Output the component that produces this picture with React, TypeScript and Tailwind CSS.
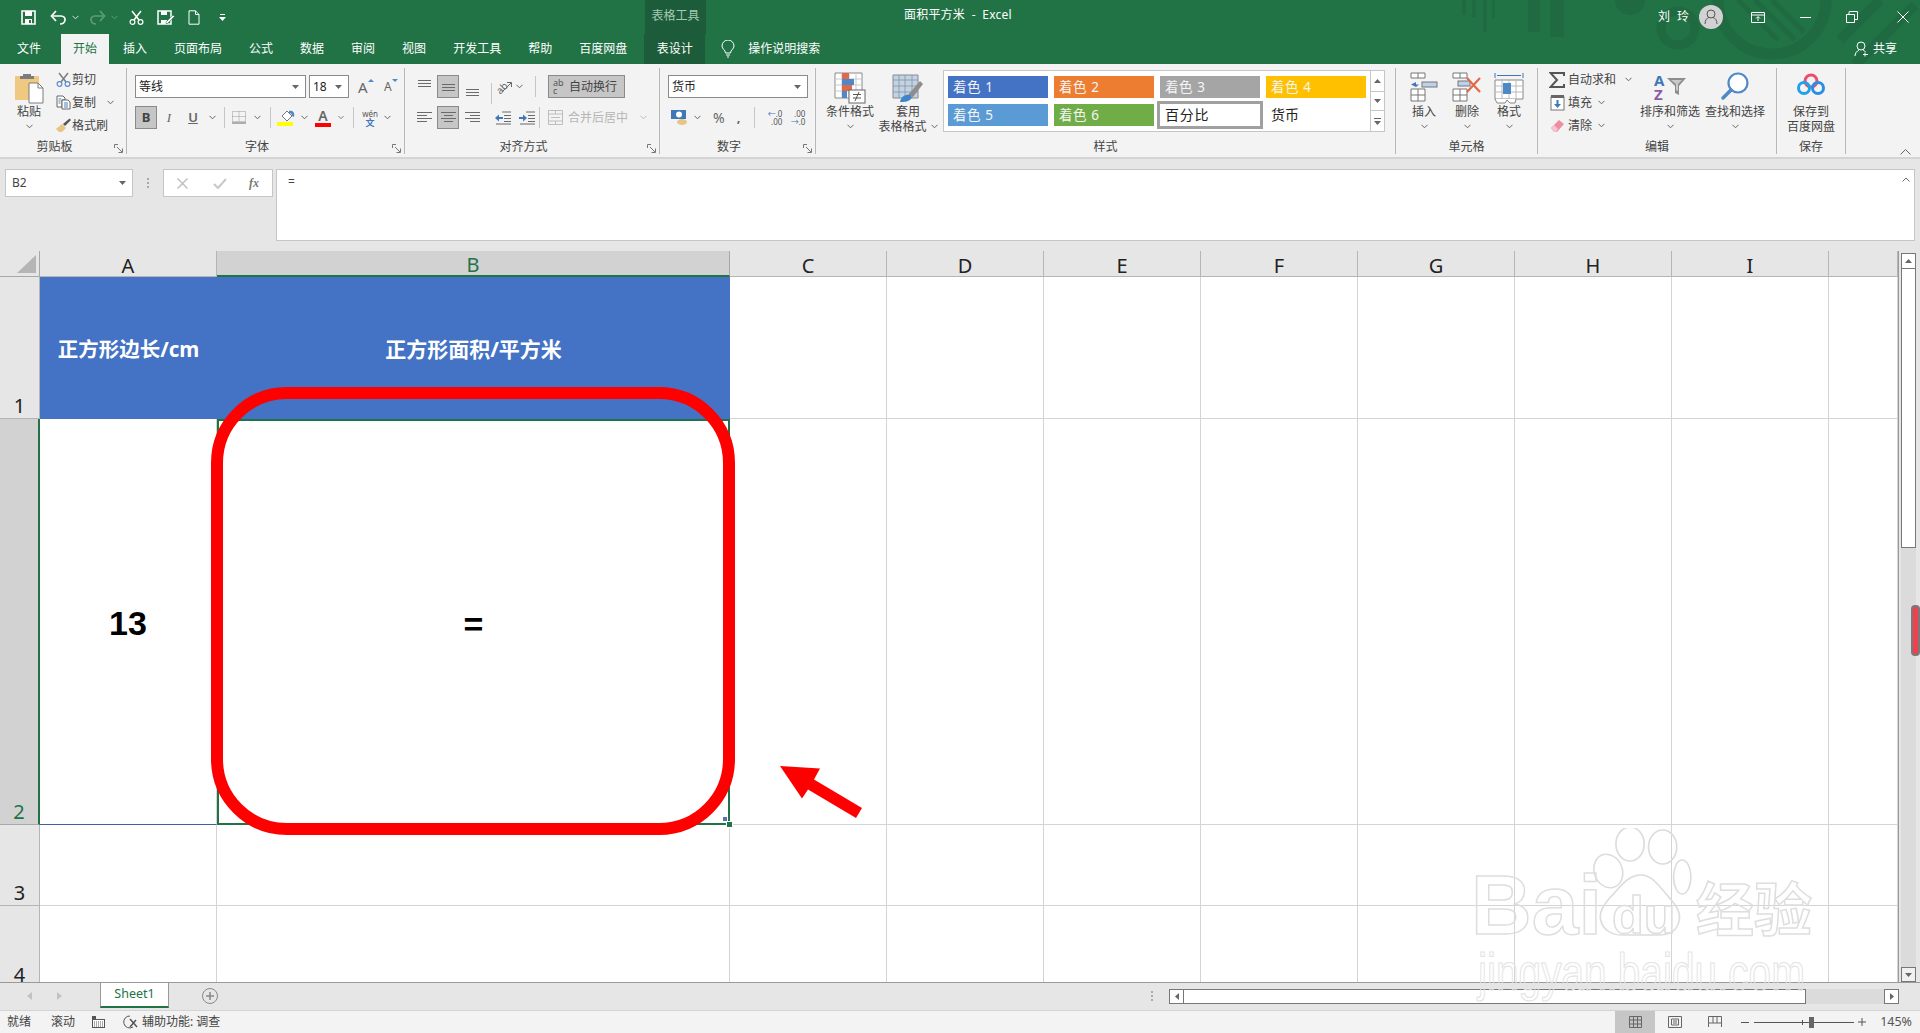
import React from "react";

const Chev = ({ cls = "text-[#666]" }: { cls?: string }) => (
  <svg width="7" height="5" viewBox="0 0 7 5" className={cls}>
    <path d="M.5 .8l3 3 3-3" stroke="currentColor" fill="none" />
  </svg>
);
const Caret = () => (
  <svg width="7" height="4" viewBox="0 0 7 4" className="text-[#666]">
    <path d="M0 0h7L3.5 4z" fill="currentColor" />
  </svg>
);
const Launcher = () => (
  <svg width="9" height="9" viewBox="0 0 9 9" className="absolute right-[3px] bottom-[1px] text-[#777]">
    <path d="M.5 4V.5H4M3 3l5 5M8.5 4.5v4h-4" stroke="currentColor" fill="none" />
  </svg>
);
const Sep = ({ cls }: { cls: string }) => (
  <span className={`flex justify-center ${cls}`}>
    <span className="w-px h-[21px] bg-[#c6c6c6]" />
  </span>
);

const Group = ({ w, label, launcher, children }: { w: string; label: string; launcher?: boolean; children: React.ReactNode }) => (
  <div className={`flex flex-col h-[86px] border-r border-[#b8b8b8] ${w}`}>
    <div className="flex h-[72px]">{children}</div>
    <div className={`relative flex-1 flex items-center justify-center pt-[3px] text-[12px] leading-[14px] text-[#444] ${launcher ? "pr-[17px]" : ""}`}>
      {label}
      {launcher && <Launcher />}
    </div>
  </div>
);

const Big = ({ w, icon, l1, l2, chevInline }: { w: string; icon: React.ReactNode; l1: string; l2?: string; chevInline?: boolean }) => (
  <div className={`flex flex-col items-center text-[12px] leading-[15px] text-[#444] ${w}`}>
    <div className="h-[36px] pt-[4px] flex justify-center">{icon}</div>
    <div className="whitespace-nowrap">{l1}</div>
    {l2 ? (
      <div className="flex items-center gap-[4px] whitespace-nowrap">
        {l2}
        {chevInline && <Chev />}
      </div>
    ) : (
      <div className="h-[15px] flex items-center justify-center">
        <Chev />
      </div>
    )}
  </div>
);

const SaveIcon = () => (
  <svg width="15" height="15" viewBox="0 0 15 15">
    <path d="M1 1h13v13H1z" fill="none" stroke="#fff" strokeWidth="1.6" />
    <path d="M4 1h7v5H4zM4 9h7v5H4z" fill="#fff" />
    <path d="M8 10h2v3H8z" fill="#217346" />
  </svg>
);

const PasteIcon = () => (
  <svg width="30" height="32" viewBox="0 0 30 32">
    <rect x="1" y="4" width="24" height="24" rx="1" fill="#efc881" />
    <path d="M9 4V2h8v2h3v3H6V4z" fill="#7d7d7d" />
    <path d="M15 11h9l5 5v15H15z" fill="#fff" stroke="#7d7d7d" />
    <path d="M24 11v5h5" fill="none" stroke="#7d7d7d" />
  </svg>
);
const ScissorIcon = ({ c = "#7d7d7d", c2 = "#5b8dc7", s = 15 }: { c?: string; c2?: string; s?: number }) => (
  <svg width={s} height={s} viewBox="0 0 15 15">
    <path d="M3 1l7 9M12 1L5 10" stroke={c} strokeWidth="1.5" fill="none" />
    <circle cx="3.5" cy="12" r="2.4" fill="none" stroke={c2} strokeWidth="1.2" />
    <circle cx="11.5" cy="12" r="2.4" fill="none" stroke={c2} strokeWidth="1.2" />
  </svg>
);
const CopyIcon = () => (
  <svg width="15" height="15" viewBox="0 0 15 15">
    <path d="M1 1h6l2 2v2H6v7H1z" fill="#fff" stroke="#666" />
    <path d="M6 5h6l2 2v7H6z" fill="#fff" stroke="#666" />
    <path d="M8 8h4M8 10h4M8 12h4M2.5 4h3M2.5 6h2M2.5 8h2" stroke="#4a7ebb" />
  </svg>
);
const BrushIcon = () => (
  <svg width="17" height="15" viewBox="0 0 17 15">
    <path d="M1 11l6-5 4 4-4 4H4z" fill="#e9c583" />
    <path d="M8 6l2 2 6-6-1.500-1.500z" fill="#555" />
  </svg>
);
const AlignLines = ({ pad, kind }: { pad: number; kind: "l" | "c" | "r" }) => {
  const ws = [15, kind === "c" ? 9 : 10, 15, kind === "c" ? 9 : 10];
  return (
    <svg width="15" height="13" viewBox="0 0 15 13">
      {ws.map((w, i) => {
        const x = kind === "l" ? 0 : kind === "r" ? 15 - w : (15 - w) / 2;
        return <rect key={i} x={x} y={pad + i * 3} width={w} height="1" fill="#6a6a6a" />;
      })}
    </svg>
  );
};
const VLines = ({ y }: { y: number }) => (
  <svg width="15" height="20" viewBox="0 0 15 20">
    {[0, 3, 6].map((d) => (
      <rect key={d} x="1" y={y + d} width="13" height="1" fill="#6a6a6a" />
    ))}
  </svg>
);
const Indent = ({ right }: { right?: boolean }) => (
  <svg width="17" height="14" viewBox="0 0 17 14">
    <path d="M7 1h9M9 4.500h7M9 7.500h7M9 10.500h7M1 13h15" stroke="#6a6a6a" fill="none" />
    {right ? (
      <path d="M0 6h4V3.500L8 7l-4 3.500V8H0z" fill="#3f77b8" />
    ) : (
      <path d="M8 6H4V3.500L0 7l4 3.500V8h4z" fill="#3f77b8" />
    )}
  </svg>
);
const CondIcon = () => (
  <svg width="32" height="32" viewBox="0 0 32 32">
    <path d="M1 1h27v25H1z" fill="#fff" stroke="#8a8a8a" />
    <path d="M1 7h27M1 13h27M1 19h27M8 1v25M15 1v25M22 1v25" stroke="#c9c9c9" />
    <rect x="8" y="1" width="7" height="6" fill="#e0694a" />
    <rect x="8" y="7" width="12" height="6" fill="#4f88c6" />
    <rect x="8" y="13" width="10" height="6" fill="#e0694a" />
    <rect x="8" y="19" width="5" height="7" fill="#4f88c6" />
    <rect x="15" y="18" width="16" height="13" fill="#fff" stroke="#666" />
    <path d="M19 22.500h8M19 26h8M25 20l-4 9" stroke="#555" fill="none" />
  </svg>
);
const TableFmtIcon = () => (
  <svg width="32" height="32" viewBox="0 0 32 32">
    <path d="M1 3h25v23H1z" fill="#c0d4e9" stroke="#8a8a8a" />
    <path d="M1 8h25M1 14h25M1 20h25M7 3v23M13 3v23M20 3v23" stroke="#8f8f8f" strokeWidth=".8" />
    <path d="M16 23L28 9l3 3-10 13z" fill="#8d8d8d" />
    <path d="M8 30c1-6 6-8 10-7 2 1 2 3 1 4-3 3-7 3-11 3z" fill="#3f86c9" />
  </svg>
);
const InsertIcon = () => (
  <svg width="28" height="30" viewBox="0 0 28 30">
    <path d="M1 1h14v5H1zM8 1v5M1 17h14v12H1zM1 23h14M8 17v12" fill="#fff" stroke="#777" />
    <rect x="12" y="10" width="15" height="5" fill="#bcd2ea" stroke="#777" />
    <path d="M1 12.500h3V10l5 2.500L4 15" fill="#3f77b8" transform="matrix(-1 0 0 1 10 0)" />
  </svg>
);
const DeleteIcon = () => (
  <svg width="30" height="30" viewBox="0 0 30 30">
    <path d="M1 1h14v5H1zM8 1v5M1 17h14v12H1zM1 23h14M8 17v12" fill="#fff" stroke="#777" />
    <rect x="6" y="9" width="12" height="5" fill="#bcd2ea" stroke="#777" />
    <path d="M15 6l13 14M28 6L15 20" stroke="#e0694a" strokeWidth="2.200" />
  </svg>
);
const FmtIcon = () => (
  <svg width="30" height="32" viewBox="0 0 30 32">
    <path d="M1 1v5M29 1v5M3 3.500h24" stroke="#3f77b8" fill="none" />
    <path d="M1 8h28v19H1z" fill="#fff" stroke="#888" />
    <path d="M1 14h28M1 20h28M8 8v19M15 8v19M22 8v19" stroke="#bbb" />
    <rect x="9" y="11" width="8" height="11" fill="#4f88c6" />
    <path d="M1 27l2 4h8l2-3 3 3h5l1-4" fill="#fff" stroke="#888" />
  </svg>
);
const SumIcon = () => (
  <svg width="16" height="16" viewBox="0 0 16 16">
    <path d="M15 4V1H1.500L8 8l-6.500 7H15v-3" fill="none" stroke="#555" strokeWidth="2" />
  </svg>
);
const FillIcon = () => (
  <svg width="15" height="16" viewBox="0 0 15 16">
    <rect x="1" y="2" width="13" height="13" fill="#fff" stroke="#777" />
    <rect x="1" y="0" width="13" height="3" fill="#666" />
    <path d="M6.500 5h2v4H11l-3.500 4L4 9h2.500z" fill="#3f77b8" />
  </svg>
);
const EraserIcon = () => (
  <svg width="15" height="14" viewBox="0 0 15 14">
    <path d="M1 9l8-8 5 4-7 8H4z" fill="#ec8fa3" />
    <path d="M1 9l3-3 4 4-2 3H4z" fill="#f5c4cf" />
  </svg>
);
const SortIcon = () => (
  <div className="flex items-center h-[30px] w-[32px]">
    <span className="flex flex-col font-bold text-[15px] leading-[14px] w-[13px]">
      <span className="text-[#3f77b8]">A</span>
      <span className="text-[#8c5aa8]">Z</span>
    </span>
    <svg width="19" height="20" viewBox="0 0 19 20">
      <path d="M0 1h19l-7 8v9l-4-2V9z" fill="#8d8d8d" />
      <path d="M4 3h11l-4 4v7l-2-1V7z" fill="#c9c9c9" />
    </svg>
  </div>
);
const SearchIcon = () => (
  <svg width="30" height="30" viewBox="0 0 30 30">
    <circle cx="18" cy="11" r="9.500" fill="#fff" stroke="#4f88c6" strokeWidth="2.200" />
    <path d="M11 18L3 26" stroke="#4f88c6" strokeWidth="3.500" strokeLinecap="round" />
  </svg>
);
const BaiduIcon = () => (
  <svg width="28" height="26" viewBox="0 0 28 26">
    <circle cx="14" cy="9" r="6" fill="none" stroke="#ef4b6c" strokeWidth="3" />
    <circle cx="7" cy="16" r="5.500" fill="none" stroke="#1ea3e8" strokeWidth="3" />
    <circle cx="21" cy="16" r="5.500" fill="none" stroke="#2a8fe0" strokeWidth="3" />
  </svg>
);

const SmallRow = ({ icon, text, gap, chev }: { icon: React.ReactNode; text: string; gap: string; chev?: string }) => (
  <div className="h-[23px] flex items-center text-[12px] text-[#444]">
    <span className="w-[18px] flex justify-center">{icon}</span>
    <span className={`whitespace-nowrap ${gap}`}>{text}</span>
    {chev && (
      <span className={chev}>
        <Chev />
      </span>
    )}
  </div>
);

const TitleBar = () => (
  <div className="relative h-[34px] flex items-center text-white text-[12px] leading-[16px]">
    <svg className="absolute left-[1450px] top-0 text-[#1f6a41]" width="470" height="64" viewBox="0 0 470 64" fill="currentColor">
      <path d="M12 0h4v15h-4zM22 0h4v17h-4zM33 0h4v32h-4zM42 0h3v18h-3zM78 0h12v32H78zM100 0h14v37h-14z" />
      <circle cx="180" cy="0" r="15" />
      <circle cx="228" cy="28" r="17" fill="none" stroke="currentColor" strokeWidth="9" />
      <circle cx="322" cy="0" r="54" fill="none" stroke="currentColor" strokeWidth="11" />
      <path d="M288 0l40 40M305 0l40 40M322 0l32 32" stroke="currentColor" strokeWidth="5" fill="none" />
      <path d="M465 5l-60 60M430 0l-40 40" stroke="currentColor" strokeWidth="10" fill="none" />
    </svg>
    <div className="relative flex items-center h-full w-[645px]">
      <span className="w-[21px]" />
      <SaveIcon />
      <span className="ml-[14px] flex items-center gap-[5px]">
        <svg width="17" height="15" viewBox="0 0 17 15">
          <path d="M3 6h8c6 0 5 8-1 8" fill="none" stroke="#fff" strokeWidth="1.700" />
          <path d="M6 1L1.500 6 6 11" fill="none" stroke="#fff" strokeWidth="1.700" />
        </svg>
        <Chev cls="text-[#d8e6dd]" />
      </span>
      <span className="ml-[10px] flex items-center gap-[5px]">
        <svg width="17" height="15" viewBox="0 0 17 15">
          <path d="M14 6H6c-6 0-5 8 1 8" fill="none" stroke="#5f9b7c" strokeWidth="1.700" />
          <path d="M11 1l4.500 5L11 11" fill="none" stroke="#5f9b7c" strokeWidth="1.700" />
        </svg>
        <Chev cls="text-[#5f9b7c]" />
      </span>
      <span className="ml-[11px]">
        <ScissorIcon c="#fff" c2="#fff" />
      </span>
      <span className="ml-[13px]">
        <svg width="18" height="15" viewBox="0 0 18 15">
          <path d="M1 1h13v13H1z" fill="none" stroke="#fff" strokeWidth="1.500" />
          <path d="M4 1h6v4H4zM4 10h6v4H4z" fill="#fff" />
          <path d="M9 12l7-7 1.500 1.500-7 7H9z" fill="#fff" stroke="#217346" strokeWidth=".6" />
        </svg>
      </span>
      <span className="ml-[13px]">
        <svg width="12" height="15" viewBox="0 0 12 15">
          <path d="M1 .8h6.500L11 4.500v9.700H1zM7.500 .8v3.700H11" fill="none" stroke="#fff" />
        </svg>
      </span>
      <span className="ml-[19px]">
        <svg width="7" height="7" viewBox="0 0 7 7">
          <path d="M1 .5h5" stroke="#fff" />
          <path d="M0 3h7L3.500 7z" fill="#fff" />
        </svg>
      </span>
    </div>
    <div className="relative h-full w-[61px] bg-[#1d5c3a] flex items-center justify-center pb-[3px] text-[#a3c9b3]">表格工具</div>
    <div className="relative w-[198px]" />
    <div className="relative whitespace-nowrap tracking-[0.2px] -mt-[4px]">面积平方米&nbsp; -&nbsp; Excel</div>
    <div className="relative ml-auto flex items-center h-full">
      <span className="tracking-[2px]">刘 玲</span>
      <span className="ml-[8px] w-[24px] h-[24px] rounded-full bg-[#d2d2d2] flex items-center justify-center">
        <svg width="14" height="16" viewBox="0 0 14 16" fill="none" stroke="#555">
          <circle cx="7" cy="5" r="4" />
          <path d="M1 15c0-4 2-6 4-6.500M13 15c0-4-2-6-4-6.500" />
        </svg>
      </span>
      <svg className="ml-[28px]" width="14" height="11" viewBox="0 0 14 11" fill="none" stroke="#fff">
        <path d="M.5 .5h13v10H.5zM.5 3h13M7 9V5M5 6.500l2-2 2 2" />
      </svg>
      <span className="ml-[35px] w-[11px] h-px bg-white" />
      <svg className="ml-[35px]" width="12" height="12" viewBox="0 0 12 12" fill="none" stroke="#fff">
        <path d="M.5 3.500h8v8h-8zM3 3.500V1a.5 .5 0 0 1 .5-.5h8v8H9" />
      </svg>
      <svg className="ml-[39px] mr-[11px]" width="12" height="12" viewBox="0 0 12 12" stroke="#fff">
        <path d="M.5 .5l11 11M11.500 .5l-11 11" />
      </svg>
    </div>
  </div>
);

const tabs = [
  ["文件", ""],
  ["开始", "active"],
  ["插入", ""],
  ["页面布局", ""],
  ["公式", ""],
  ["数据", ""],
  ["审阅", ""],
  ["视图", ""],
  ["开发工具", ""],
  ["帮助", ""],
  ["百度网盘", ""],
];
const TabBar = () => (
  <div className="relative h-[30px] flex items-stretch pl-[3.500px] text-white text-[12px] leading-[16px]">
    {tabs.map(([t, a]) => (
      <div
        key={t}
        className={a ? "flex items-center px-[12px] ml-[6.500px] mr-[0.500px] bg-[#f3f3f3] text-[#217346]" : "flex items-center px-[13.500px]"}
      >
        {t}
      </div>
    ))}
    <div className="ml-[3.500px] w-[61px] bg-[#1d5c3a] flex items-center justify-center">表设计</div>
    <div className="ml-[16px] flex items-center">
      <svg width="14" height="18" viewBox="0 0 14 18" fill="none" stroke="#fff">
        <path d="M4.500 13c0-3-3.500-4-3.500-7a6 6 0 0 1 12 0c0 3-3.500 4-3.500 7zM5 15h4M6 17h2" />
      </svg>
      <span className="ml-[13px]">操作说明搜索</span>
    </div>
    <div className="ml-auto mr-[23px] flex items-center gap-[3px]">
      <svg width="16" height="16" viewBox="0 0 16 16" fill="none" stroke="#fff">
        <circle cx="7" cy="5" r="4" />
        <path d="M1 15c0-3 2-5 4-6M9 9c1 .3 2 1 2.500 2M11 11.500v4M9 13.500h5" />
      </svg>
      <span>共享</span>
    </div>
  </div>
);

const Swatch = ({ t, c }: { t: string; c: string }) => (
  <div className={`h-[22px] flex items-center pl-[5px] text-[13.500px] tracking-[0.6px] text-[#f4f4f4] ${c}`}>{t}</div>
);

const Ribbon = () => (
  <div className="h-[95px] pt-[4px] flex bg-[#f3f3f3] border-b-2 border-[#d4d4d4] font-[inherit]">
    <Group w="w-[127px]" label="剪贴板" launcher>
      <div className="w-[54px] pl-[13px]">
        <Big w="w-[32px]" icon={<PasteIcon />} l1="粘贴" />
      </div>
      <div>
        <SmallRow icon={<ScissorIcon />} text="剪切" gap="ml-[0px]" />
        <SmallRow icon={<CopyIcon />} text="复制" gap="ml-[0px]" chev="ml-[11px]" />
        <SmallRow icon={<BrushIcon />} text="格式刷" gap="ml-[0px]" />
      </div>
    </Group>

    <Group w="w-[278px]" label="字体" launcher>
      <div className="pl-[8px] pt-[7px] w-full">
        <div className="flex items-center h-[23px] gap-[3px]">
          <div className="w-[171px] h-[23px] border border-[#8a8a8a] bg-white flex items-center justify-between pl-[3px] pr-[6px] text-[12px] text-[#222]">
            等线
            <Caret />
          </div>
          <div className="w-[40px] h-[23px] border border-[#8a8a8a] bg-white flex items-center justify-between pl-[3px] pr-[6px] text-[12px] text-[#222]">
            18
            <Caret />
          </div>
          <span className="ml-[6px] flex items-start text-[15px] leading-[18px] text-[#666] w-[17px]">
            A
            <svg className="mt-[1px]" width="6" height="3" viewBox="0 0 6 3"><path d="M0 3h6L3 0z" fill="#4f88c6" /></svg>
          </span>
          <span className="ml-[6px] flex items-start text-[12px] leading-[18px] text-[#666] w-[15px]">
            A
            <svg className="mt-[1px]" width="6" height="3" viewBox="0 0 6 3"><path d="M0 0h6L3 3z" fill="#4f88c6" /></svg>
          </span>
        </div>
        <div className="flex items-center h-[23px] mt-[8px] text-[#666]">
          <span className="w-[22px] h-[23px] bg-[#c6c6c6] border border-[#8a8a8a] flex items-center justify-center font-bold text-[13px] text-[#444]">B</span>
          <span className="w-[24px] text-center italic text-[13px] font-['Liberation_Serif',serif]">I</span>
          <span className="w-[24px] text-center underline text-[13px] font-semibold">U</span>
          <span className="w-[14px] flex justify-center"><Chev /></span>
          <Sep cls="w-[10px]" />
          <span className="w-[20px] flex justify-center">
            <svg width="14" height="13" viewBox="0 0 14 13" fill="none" stroke="#999" strokeDasharray="1 1">
              <path d="M.5 .5h13v10H.5zM.5 5.500h13M7 .5v10" />
              <path d="M0 12h14" stroke="#666" strokeDasharray="none" />
            </svg>
          </span>
          <span className="w-[16px] flex justify-center"><Chev /></span>
          <Sep cls="w-[10px]" />
          <span className="w-[25px] flex justify-center">
            <svg width="22" height="17" viewBox="0 0 22 17">
              <path d="M5 7l5-5 5 5-5 5z" fill="#fff" stroke="#777" />
              <path d="M12 2c4-1 6 2 5 6l-2-1c0-2-1-3-3-3z" fill="#4f88c6" />
              <rect x="0" y="13" width="16" height="4" fill="#ffff00" />
            </svg>
          </span>
          <span className="w-[8px] flex justify-center"><Chev /></span>
          <span className="w-[30px] flex justify-center">
            <span className="w-[16px] flex flex-col items-center font-semibold text-[14px] leading-[14px] text-[#666]">
              A
              <span className="w-[16px] h-[4px] bg-[#ff0000]" />
            </span>
          </span>
          <span className="w-[6px] flex justify-center"><Chev /></span>
          <Sep cls="w-[18px]" />
          <span className="w-[16px] flex flex-col items-center text-[#3f77b8] leading-[9px]">
            <span className="text-[8px] text-[#555]">wén</span>
            <span className="text-[9px] font-bold">文</span>
          </span>
          <span className="w-[18px] flex justify-center"><Chev /></span>
        </div>
      </div>
    </Group>

    <Group w="w-[255px]" label="对齐方式" launcher>
      <div className="pl-[12px] pt-[7px] flex w-full">
        <div className="w-[70px]">
          <div className="flex items-center h-[23px]">
            <VLines y={3} />
            <span className="ml-[5px] w-[22px] h-[23px] bg-[#c6c6c6] border border-[#8a8a8a] flex items-center justify-center"><VLines y={7} /></span>
            <span className="ml-[6px]"><VLines y={12} /></span>
          </div>
          <div className="flex items-center h-[23px] mt-[8px]">
            <AlignLines pad={1} kind="l" />
            <span className="ml-[5px] w-[22px] h-[23px] bg-[#c6c6c6] border border-[#8a8a8a] flex items-center justify-center"><AlignLines pad={1} kind="c" /></span>
            <span className="ml-[6px]"><AlignLines pad={1} kind="r" /></span>
          </div>
        </div>
        <Sep cls="w-[8px] mt-[8px] self-start" />
        <div>
          <div className="flex items-center h-[23px]">
            <span className="relative w-[17px] h-[16px] text-[10px] leading-[14px] text-[#666]">
              <span className="block -rotate-45">ab</span>
              <svg className="absolute left-0 top-0" width="17" height="16" viewBox="0 0 17 16">
                <path d="M7 13L16 4M12 3.500h4.500V8" stroke="#666" fill="none" />
              </svg>
            </span>
            <span className="ml-[4px]"><Chev /></span>
            <Sep cls="w-[25px]" />
            <span className="w-[77px] h-[23px] bg-[#c6c6c6] border border-[#8a8a8a] flex items-center pl-[4px] gap-[3px] text-[12px] text-[#444] whitespace-nowrap">
              <span className="text-[9px] leading-[8px] text-[#555] w-[13px]">ab<br />c</span>
              自动换行
            </span>
          </div>
          <div className="flex items-center h-[23px] mt-[8px]">
            <Indent />
            <span className="ml-[7px]"><Indent right /></span>
            <Sep cls="w-[7px]" />
            <span className="ml-[5px] flex items-center gap-[5px] text-[12px] text-[#b5b5b5] whitespace-nowrap">
              <svg width="15" height="15" viewBox="0 0 15 15" fill="none" stroke="#bdbdbd">
                <path d="M.5 .5h14v14H.5zM.5 4h14M.5 11h14M7.500 .5V4M7.500 11v3.500M3 7.500h9" />
              </svg>
              合并后居中
              <Chev cls="ml-[7px] text-[#bbb]" />
            </span>
          </div>
        </div>
      </div>
    </Group>

    <Group w="w-[156px]" label="数字" launcher>
      <div className="pl-[8px] pt-[7px] w-full">
        <div className="w-[140px] h-[23px] border border-[#8a8a8a] bg-white flex items-center justify-between pl-[3px] pr-[6px] text-[12px] text-[#222]">
          货币
          <Caret />
        </div>
        <div className="flex items-center h-[23px] mt-[8px] text-[#666]">
          <svg className="ml-[3px]" width="17" height="16" viewBox="0 0 17 16">
            <rect x="0" y="0" width="15" height="9" fill="#3f77b8" />
            <circle cx="8" cy="4.500" r="3" fill="#fff" />
            <ellipse cx="11" cy="12" rx="5" ry="3" fill="#e9c583" />
          </svg>
          <span className="ml-[6px]"><Chev /></span>
          <span className="ml-[12px] text-[14px] leading-none">%</span>
          <span className="ml-[12px] text-[13px] font-bold leading-none">,</span>
          <Sep cls="w-[20px] ml-[4px]" />
          <span className="ml-[3px] text-[8px] leading-[8px] text-[#555] text-right w-[15px]"><span className="text-[#3f77b8]">←</span>.0<br />.00</span>
          <span className="ml-[8px] text-[8px] leading-[8px] text-[#555] text-right w-[15px]">.00<br /><span className="text-[#3f77b8]">→</span>.0</span>
        </div>
      </div>
    </Group>

    <Group w="w-[580px]" label="样式">
      <div className="w-[68px]">
        <Big w="w-[68px]" icon={<CondIcon />} l1="条件格式" />
      </div>
      <Big w="w-[48px]" icon={<TableFmtIcon />} l1="套用" l2="表格格式" chevInline />
      <div className="ml-[11px] mt-[2px] w-[442px] h-[62px] border border-[#c6c6c6] bg-white flex">
        <div className="flex-1 pl-[4px] pt-[5px] grid grid-cols-[100px_100px_100px_100px] grid-rows-[22px_22px] gap-x-[6px] gap-y-[6px]">
          <Swatch t="着色 1" c="bg-[#4472c4]" />
          <Swatch t="着色 2" c="bg-[#ed7d31]" />
          <Swatch t="着色 3" c="bg-[#a5a5a5]" />
          <Swatch t="着色 4" c="bg-[#ffc000]" />
          <Swatch t="着色 5" c="bg-[#5b9bd5]" />
          <Swatch t="着色 6" c="bg-[#70ad47]" />
          <div className="m-[-3px] border-[3px] border-[#a0a0a0] flex items-center pl-[5px] pb-[2px] text-[14px] tracking-[0.8px] text-[#222]">百分比</div>
          <div className="flex items-center pl-[5px] pb-[2px] text-[14px] text-[#222]">货币</div>
        </div>
        <div className="w-[14px] border-l border-[#c6c6c6] flex flex-col">
          <div className="h-[21px] border-b border-[#c6c6c6] flex items-center justify-center">
            <svg width="7" height="4" viewBox="0 0 7 4"><path d="M0 4h7L3.500 0z" fill="#666" /></svg>
          </div>
          <div className="h-[19px] border-b border-[#c6c6c6] flex items-center justify-center"><Caret /></div>
          <div className="flex-1 flex flex-col items-center justify-center gap-[2px]">
            <span className="w-[7px] h-px bg-[#666]" />
            <Caret />
          </div>
        </div>
      </div>
    </Group>

    <Group w="w-[142px]" label="单元格">
      <Big w="w-[46px] ml-[5px]" icon={<InsertIcon />} l1="插入" />
      <Big w="w-[40px]" icon={<DeleteIcon />} l1="删除" />
      <Big w="w-[44px]" icon={<FmtIcon />} l1="格式" />
    </Group>

    <Group w="w-[239px]" label="编辑">
      <div className="pl-[10px] w-[100px]">
        <SmallRow icon={<SumIcon />} text="自动求和" gap="ml-[2px]" chev="ml-[9px]" />
        <SmallRow icon={<FillIcon />} text="填充" gap="ml-[2px]" chev="ml-[6px]" />
        <SmallRow icon={<EraserIcon />} text="清除" gap="ml-[2px]" chev="ml-[6px]" />
      </div>
      <Big w="w-[64px]" icon={<SortIcon />} l1="排序和筛选" />
      <Big w="w-[66px]" icon={<SearchIcon />} l1="查找和选择" />
    </Group>

    <Group w="w-[69px]" label="保存">
      <Big w="w-[68px]" icon={<BaiduIcon />} l1="保存到" l2="百度网盘" />
    </Group>

    <div className="flex-1 flex items-end justify-end pr-[9px] pb-[2px]">
      <svg width="11" height="6" viewBox="0 0 11 6"><path d="M.5 5.500l5-5 5 5" fill="none" stroke="#666" /></svg>
    </div>
  </div>
);

const FormulaBar = () => (
  <div className="h-[92px] bg-[#e6e6e6] flex items-start pt-[10px] pl-[5px]">
    <div className="w-[128px] h-[28px] bg-white border border-[#c6c6c6] flex items-center justify-between pl-[6px] pr-[6px] text-[12px] text-[#444]">
      B2
      <Caret />
    </div>
    <div className="w-[30px] h-[28px] flex flex-col items-center justify-center gap-[2px]">
      <span className="w-[2px] h-[2px] bg-[#aaa]" />
      <span className="w-[2px] h-[2px] bg-[#aaa]" />
      <span className="w-[2px] h-[2px] bg-[#aaa]" />
    </div>
    <div className="w-[110px] h-[28px] bg-white border border-[#c6c6c6] flex items-center">
      <svg className="ml-[13px]" width="11" height="11" viewBox="0 0 11 11"><path d="M.5 .5l10 10M10.500 .5l-10 10" stroke="#c0c0c0" strokeWidth="1.500" /></svg>
      <svg className="ml-[25px]" width="14" height="11" viewBox="0 0 14 11"><path d="M1 6l4 4 8-9" fill="none" stroke="#c8c8c8" strokeWidth="2" /></svg>
      <span className="ml-[22px] italic font-bold text-[12px] text-[#777] font-['Liberation_Serif',serif]">fx</span>
    </div>
    <div className="ml-[3px] w-[1639px] h-[72px] bg-white border border-[#c6c6c6] flex justify-between pl-[11px] pr-[4px] pt-[3px] text-[12px] leading-[18px] text-[#444]">
      =
      <svg className="mt-[4px]" width="8" height="5" viewBox="0 0 8 5"><path d="M.5 4.500L4 1l3.500 3.500" fill="none" stroke="#666" /></svg>
    </div>
  </div>
);

const colNames = ["A", "B", "C", "D", "E", "F", "G", "H", "I", ""];
const rows = [1, 2, 3, 4];

const gridCols = "grid grid-cols-[40px_177px_513px_157px_157px_157px_157px_157px_157px_157px_69px] grid-rows-[26px_142px_406px_81px_82px]";

const Sheet = () => (
  <div className="h-[731px] flex bg-[#e6e6e6]">
    <div className={`w-[1899px] h-[731px] overflow-hidden bg-white border-r border-[#9a9a9a] ${gridCols}`}>
      <div className="bg-[#e6e6e6] border-r border-b border-[#a8a8a8] flex items-end justify-end pr-[3px] pb-[3px]">
        <svg width="19" height="18" viewBox="0 0 19 18"><path d="M19 0v18H0z" fill="#b5b5b5" /></svg>
      </div>
      {colNames.map((c) => (
        <div
          key={c || "x"}
          className={
            c === "B"
              ? "bg-[#d2d2d2] border-b-2 border-[#217346] border-r border-r-[#a8a8a8] flex items-center justify-center pt-[4px] text-[20px] leading-none text-[#217346]"
              : "bg-[#e6e6e6] border-b border-r border-[#b5b5b5] flex items-center justify-center pt-[4px] text-[20px] leading-none text-[#222]"
          }
        >
          {c}
        </div>
      ))}
      {rows.map((r) => (
        <React.Fragment key={r}>
          <div
            className={
              r === 2
                ? "bg-[#d2d2d2] border-r-2 border-[#217346] border-b border-b-[#a8a8a8] flex items-end justify-center text-[20px] leading-[24px] text-[#217346]"
                : "bg-[#e6e6e6] border-r border-b border-[#b5b5b5] flex items-end justify-center text-[20px] leading-[24px] text-[#222]"
            }
          >
            {r}
          </div>
          {colNames.map((c) => {
            if (r === 1 && c === "A")
              return (
                <div key={c} className="bg-[#4472c4] flex items-center justify-center pt-[3px] font-bold text-[20.500px] text-white whitespace-nowrap">
                  正方形边长/cm
                </div>
              );
            if (r === 1 && c === "B")
              return (
                <div key={c} className="bg-[#4472c4] flex items-center justify-center pt-[3px] font-bold text-[21px] text-white whitespace-nowrap">
                  正方形面积/平方米
                </div>
              );
            if (r === 2 && c === "A")
              return (
                <div key={c} className="border-b border-[#3f5fa8] border-r border-r-[#d4d4d4] flex items-center justify-center pt-[4px] font-bold text-[34px] text-black font-['Liberation_Sans',sans-serif]">
                  13
                </div>
              );
            if (r === 2 && c === "B")
              return (
                <div key={c} className="relative border-2 border-[#217346] flex items-center justify-center pt-[4px] font-bold text-[34px] text-black font-['Liberation_Sans',sans-serif]">
                  =
                  <span className="absolute right-[1px] bottom-[2px] w-[4px] h-[4px] bg-[#5b6fb8]" />
                  <span className="absolute right-[-5px] bottom-[-5px] w-[7px] h-[7px] bg-[#217346] border border-white" />
                </div>
              );
            return <div key={c || "x"} className="border-r border-b border-[#d4d4d4]" />;
          })}
        </React.Fragment>
      ))}
    </div>
    <div className="pl-[2px] pt-[2px] w-[20px]">
      <div className="w-[15px] h-[729px] bg-[#dbdbdb] flex flex-col">
        <div className="h-[16px] border border-[#777] bg-white flex items-center justify-center">
          <svg width="7" height="4" viewBox="0 0 7 4"><path d="M0 4h7L3.500 0z" fill="#666" /></svg>
        </div>
        <div className="h-[279px] border border-t-0 border-[#777] bg-white" />
        <div className="flex-1" />
        <div className="h-[15px] border border-[#777] bg-[#f0f0f0] flex items-center justify-center"><Caret /></div>
      </div>
    </div>
  </div>
);

const SheetTabs = () => (
  <div className="h-[28px] bg-[#e6e6e6] border-t border-[#9a9a9a] flex items-start text-[#bbb]">
    <svg className="ml-[27px] mt-[9px]" width="5" height="8" viewBox="0 0 5 8"><path d="M5 0v8L0 4z" fill="#c2c2c2" /></svg>
    <svg className="ml-[25px] mt-[9px]" width="5" height="8" viewBox="0 0 5 8"><path d="M0 0v8l5-4z" fill="#c2c2c2" /></svg>
    <div className="ml-[38px] w-[69px] h-[25px] bg-white border-x border-[#9a9a9a] border-b-2 border-b-[#217346] flex items-center justify-center text-[12.500px] text-[#217346]">
      Sheet1
    </div>
    <svg className="ml-[33px] mt-[5px]" width="16" height="16" viewBox="0 0 16 16" fill="none" stroke="#888">
      <circle cx="8" cy="8" r="7.500" />
      <path d="M8 4v8M4 8h8" strokeWidth="1.500" />
    </svg>
    <div className="ml-[933px] mt-[8px] flex flex-col gap-[2px]">
      <span className="w-[2px] h-[2px] bg-[#aaa]" />
      <span className="w-[2px] h-[2px] bg-[#aaa]" />
      <span className="w-[2px] h-[2px] bg-[#aaa]" />
    </div>
    <div className="ml-[16px] mt-[6px] w-[730px] h-[15px] bg-[#dbdbdb] flex">
      <div className="w-[15px] border border-[#777] bg-white flex items-center justify-center">
        <svg width="4" height="7" viewBox="0 0 4 7"><path d="M4 0v7L0 3.500z" fill="#666" /></svg>
      </div>
      <div className="w-[622px] border border-l-0 border-[#777] bg-white" />
      <div className="flex-1" />
      <div className="w-[15px] border border-[#777] bg-white flex items-center justify-center">
        <svg width="4" height="7" viewBox="0 0 4 7"><path d="M0 0v7l4-3.500z" fill="#666" /></svg>
      </div>
    </div>
  </div>
);

const StatusBar = () => (
  <div className="h-[23px] bg-[#f3f3f3] border-t border-[#d4d4d4] flex items-center text-[12px] text-[#444]">
    <span className="ml-[7px]">就绪</span>
    <span className="ml-[20px]">滚动</span>
    <svg className="ml-[17px]" width="13" height="12" viewBox="0 0 13 12">
      <rect x="0" y="0" width="4" height="3" fill="#555" />
      <rect x=".5" y="3.500" width="12" height="8" fill="#fff" stroke="#555" />
      <path d="M2 6h9M2 8h9M2 10h9" stroke="#555" strokeDasharray="1 1" />
    </svg>
    <svg className="ml-[18px]" width="15" height="14" viewBox="0 0 15 14" fill="none" stroke="#555">
      <path d="M7 1a6 6 0 1 0 3 11" />
      <path d="M7 4l7 8M13 5l-6 7" strokeWidth="1.500" />
    </svg>
    <span className="ml-[4px]">辅助功能: 调查</span>
    <div className="ml-auto flex items-center h-full">
      <span className="w-[40px] h-full bg-[#c6c6c6] flex items-center justify-center">
        <svg width="13" height="12" viewBox="0 0 13 12" fill="none" stroke="#666">
          <path d="M.5 .5h12v11H.5zM.5 4h12M.5 8h12M4.500 .5v11M8.500 .5v11" />
        </svg>
      </span>
      <svg className="ml-[13px]" width="14" height="12" viewBox="0 0 14 12" fill="none" stroke="#666">
        <path d="M.5 .5h13v11H.5zM3.500 3h7v6h-7zM5 5h4M5 7h4" />
      </svg>
      <svg className="ml-[26px]" width="14" height="12" viewBox="0 0 14 12" fill="none" stroke="#666">
        <path d="M.5 11V.5h13V11M.5 7h13M5 .5V7M9 .5V7" />
      </svg>
      <span className="ml-[19px] w-[8px] h-px bg-[#555]" />
      <div className="ml-[5px] w-[100px] flex items-center">
        <span className="w-[48px] h-px bg-[#555]" />
        <span className="w-px h-[5px] bg-[#555]" />
        <span className="w-[6px] h-px bg-[#555]" />
        <span className="w-[5px] h-[11px] bg-[#666]" />
        <span className="flex-1 h-px bg-[#555]" />
      </div>
      <svg className="ml-[4px]" width="8" height="8" viewBox="0 0 8 8"><path d="M0 4h8M4 0v8" stroke="#555" /></svg>
      <span className="ml-[14px] mr-[8px] text-[12.500px] text-[#555]">145%</span>
    </div>
  </div>
);

const Watermark = () => (
  <div className="absolute left-[1470px] top-[825px] w-[360px] h-[170px] pointer-events-none font-['Liberation_Sans',sans-serif] text-transparent">
    <svg className="absolute left-[122px] top-[3px]" width="100" height="112" viewBox="0 0 92 112" preserveAspectRatio="none" fill="none" stroke="#dcdcdc" strokeWidth="1.500">
      <ellipse cx="35" cy="16" rx="13" ry="17" />
      <ellipse cx="65" cy="19" rx="13" ry="17" />
      <ellipse cx="15" cy="43" rx="13" ry="17" transform="rotate(-15 15 43)" />
      <ellipse cx="83" cy="49" rx="8" ry="17" />
      <path d="M45 47c10 0 16 10 24 20 10 12 15 20 9 32-3 6-10 8-17 8H28c-10 0-18-5-20-15-2-8 3-16 10-24 8-9 15-21 27-21z" />
    </svg>
    <span className="absolute left-[1px] top-[32px] text-[84px] leading-[96px] font-bold [-webkit-text-stroke:1.500px_#dedede]">Bai</span>
    <span className="absolute left-[142px] top-[60px] text-[52px] leading-[60px] font-bold [-webkit-text-stroke:1.500px_#dedede]">du</span>
    <span className="absolute left-[226px] top-[46px] text-[58px] leading-[70px] font-bold font-['Noto_Sans_CJK_SC',sans-serif] [-webkit-text-stroke:1.500px_#dedede]">经验</span>
    <span className="absolute left-[8px] top-[117px] whitespace-nowrap origin-left scale-x-[0.78] text-[52px] leading-[60px] [-webkit-text-stroke:1.200px_#e4e4e4]">jingyan.baidu.com</span>
  </div>
);

export default function App() {
  return (
    <div className="relative w-[1920px] h-[1033px] overflow-hidden bg-[#217346] font-['Noto_Sans','Noto_Sans_CJK_SC',sans-serif]">
      <TitleBar />
      <TabBar />
      <Ribbon />
      <FormulaBar />
      <Sheet />
      <SheetTabs />
      <StatusBar />
      <div className="absolute left-[211px] top-[387px] w-[524px] h-[448px] border-[12px] border-[#ff0000] rounded-[76px]" />
      <svg className="absolute left-[775px] top-[760px]" width="95" height="65" viewBox="775 760 95 65">
        <path d="M780 766l40 2.500-6 11 48 28.500-6 10-48-28.500-6 9z" fill="#ff0000" />
      </svg>
      <div className="absolute left-[1911px] top-[605px] w-[9px] h-[51px] rounded-[4px] bg-[#f04050] border-2 border-[#7a7a7a]" />
      <Watermark />
    </div>
  );
}
